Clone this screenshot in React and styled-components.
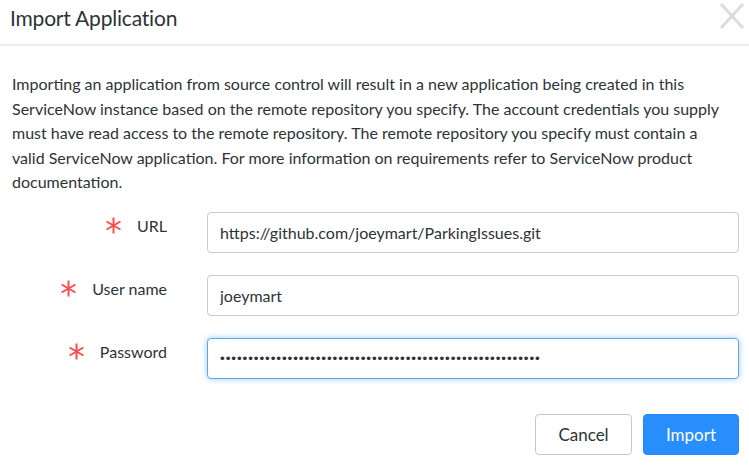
import React from "react";
import styled, { createGlobalStyle } from "styled-components";

const GlobalStyle = createGlobalStyle`
    html, body {
        margin: 0;
        padding: 0;
        background: #fff;
    }
    body {
        font-family: Lato, "Open Sans", sans-serif;
        color: #2e3338;
    }
`;

const Dialog = styled.div`
    width: 749px;
    height: 465px;
    background: #fff;
    overflow: hidden;
`;

const Header = styled.div`
    height: 46px;
    border-bottom: 2px solid #ececec;
    display: flex;
    align-items: center;
    justify-content: space-between;
    padding: 0 4px 0 10px;
    box-sizing: border-box;
`;

const Title = styled.h1`
    margin: 0;
    font-size: 21px;
    font-weight: 400;
    letter-spacing: -0.2px;
    color: #2e3338;
    position: relative;
    top: -5px;
`;

const CloseButton = styled.button`
    border: 0;
    background: none;
    padding: 0;
    width: 26px;
    height: 26px;
    display: flex;
    align-items: center;
    justify-content: center;
    position: relative;
    top: -6px;
    cursor: pointer;
`;

const Body = styled.div`
    padding: 26px 10px 0 12px;
`;

const Intro = styled.p`
    margin: 0 0 17px 0;
    font-size: 16px;
    line-height: 24.5px;
    color: #2e3338;
`;

const Form = styled.div`
    display: grid;
    grid-template-columns: 195px 1fr;
    row-gap: 22px;
`;

const LabelCell = styled.label`
    display: flex;
    justify-content: flex-end;
    align-items: center;
    gap: 15px;
    padding-right: 40px;
    padding-top: 2px;
    height: 24px;
    font-size: 16px;
    color: #2e3338;
`;

const Input = styled.input`
    width: 100%;
    height: 41px;
    box-sizing: border-box;
    border: 1px solid ${(p) => (p.$focused ? "#5ea8ee" : "#cbcbcb")};
    border-radius: 4px;
    padding: 0 12px;
    font-family: ${(p) =>
        p.type === "password" ? '"Liberation Sans", sans-serif' : 'Lato, "Open Sans", sans-serif'};
    font-size: ${(p) => (p.type === "password" ? "13.5px" : "16px")};
    letter-spacing: ${(p) => (p.type === "password" ? "0.9px" : "0")};
    color: #2e3338;
    outline: none;
    box-shadow: ${(p) =>
        p.$focused ? "0 0 6px rgba(94, 168, 238, 0.6)" : "none"};
`;

const Footer = styled.div`
    display: flex;
    justify-content: flex-end;
    gap: 11px;
    margin-top: 35px;
`;

const Button = styled.button`
    height: 41px;
    width: ${(p) => (p.$primary ? "96px" : "97px")};
    border-radius: 4px;
    font-family: Lato, "Open Sans", sans-serif;
    font-size: 17px;
    border: 1px solid ${(p) => (p.$primary ? "#2589f5" : "#c8c8c8")};
    background: ${(p) => (p.$primary ? "#278efc" : "#fff")};
    color: ${(p) => (p.$primary ? "#fff" : "#2e3338")};
    cursor: pointer;
`;

const Asterisk = () => (
    <svg width="17" height="17" viewBox="0 0 17 17">
        <g stroke="#fb4b4b" strokeWidth="2" strokeLinecap="butt">
            <line x1="8.5" y1="0.5" x2="8.5" y2="16.5" />
            <line x1="1.6" y1="4.5" x2="15.4" y2="12.5" />
            <line x1="1.6" y1="12.5" x2="15.4" y2="4.5" />
        </g>
    </svg>
);

const CloseIcon = () => (
    <svg width="26" height="26" viewBox="0 0 26 26">
        <g stroke="#dcdcdc" strokeWidth="3">
            <line x1="2" y1="1" x2="24" y2="25" />
            <line x1="24" y1="1" x2="2" y2="25" />
        </g>
    </svg>
);

const fields = [
    { id: "url", label: "URL", value: "https://github.com/joeymart/ParkingIssues.git" },
    { id: "user", label: "User name", value: "joeymart" },
    { id: "pass", label: "Password", value: "x".repeat(57), type: "password", focused: true },
];

const App = () => {
    return (
        <Dialog>
            <GlobalStyle />
            <Header>
                <Title>Import Application</Title>
                <CloseButton aria-label="Close">
                    <CloseIcon />
                </CloseButton>
            </Header>
            <Body>
                <Intro>
                    Importing an application from source control will result in a new
                    application being created in this<br />
                    ServiceNow instance based on the remote repository you specify. The
                    account credentials you supply<br />
                    must have read access to the remote repository. The remote repository
                    you specify must contain a<br />
                    valid ServiceNow application. For more information on requirements
                    refer to ServiceNow product<br />
                    documentation.
                </Intro>
                <Form>
                    {fields.map((f) => (
                        <React.Fragment key={f.id}>
                            <LabelCell htmlFor={f.id}>
                                <Asterisk />
                                {f.label}
                            </LabelCell>
                            <Input
                                id={f.id}
                                type={f.type || "text"}
                                defaultValue={f.value}
                                $focused={f.focused}
                                readOnly
                            />
                        </React.Fragment>
                    ))}
                </Form>
                <Footer>
                    <Button>Cancel</Button>
                    <Button $primary>Import</Button>
                </Footer>
            </Body>
        </Dialog>
    );
};

export default App;
